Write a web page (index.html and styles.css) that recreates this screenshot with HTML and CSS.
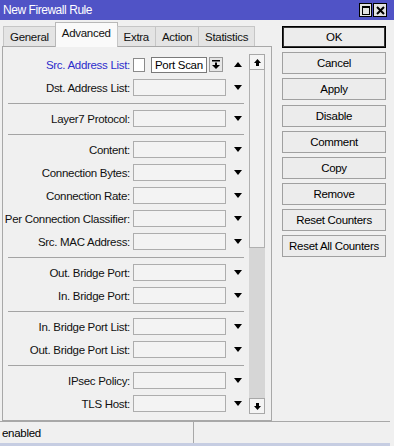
FILE: index.html
```html
<!DOCTYPE html>
<html lang="en">
<head>
  <meta charset="UTF-8" />
  <title>New Firewall Rule</title>
  <link rel="stylesheet" href="styles.css">
</head>
<body>
  <!-- Title bar -->
  <div class="titlebar">
    <span class="title">New Firewall Rule</span>
    <div class="title-buttons">
      <span class="title-btn"><span class="max-box"></span></span>
      <span class="title-btn close">
        <svg width="9" height="9" viewBox="0 0 9 9"><path d="M1 1 L8 8 M8 1 L1 8" stroke="#000" stroke-width="2"/></svg>
      </span>
    </div>
  </div>

  <div class="main">
    <!-- Tabs + form -->
    <div class="tabs-area">
      <div class="tabs">
        <div class="tab">General</div>
        <div class="tab active">Advanced</div>
        <div class="tab">Extra</div>
        <div class="tab">Action</div>
        <div class="tab">Statistics</div>
      </div>

      <div class="panel">
        <div class="form">
          <div class="row">
            <span class="label blue">Src. Address List:</span>
            <div class="multi">
              <span class="check"></span>
              <span class="value">Port Scan</span>
              <span class="drop-btn">
                <svg width="8" height="9" viewBox="0 0 8 9"><rect x="0" y="0" width="8" height="1.5" fill="#000"/><rect x="3" y="2.5" width="2" height="2.5" fill="#000"/><path d="M0 5 L8 5 L4 9 Z" fill="#000"/></svg>
              </span>
            </div>
            <span class="arrow up"></span>
          </div>
          <div class="row">
            <span class="label">Dst. Address List:</span>
            <span class="field"></span>
            <span class="arrow"></span>
          </div>
          <div class="sep"></div>
          <div class="row">
            <span class="label">Layer7 Protocol:</span>
            <span class="field"></span>
            <span class="arrow"></span>
          </div>
          <div class="sep"></div>
          <div class="row">
            <span class="label">Content:</span>
            <span class="field"></span>
            <span class="arrow"></span>
          </div>
          <div class="row">
            <span class="label">Connection Bytes:</span>
            <span class="field"></span>
            <span class="arrow"></span>
          </div>
          <div class="row">
            <span class="label">Connection Rate:</span>
            <span class="field"></span>
            <span class="arrow"></span>
          </div>
          <div class="row">
            <span class="label">Per Connection Classifier:</span>
            <span class="field"></span>
            <span class="arrow"></span>
          </div>
          <div class="row">
            <span class="label">Src. MAC Address:</span>
            <span class="field"></span>
            <span class="arrow"></span>
          </div>
          <div class="sep"></div>
          <div class="row">
            <span class="label">Out. Bridge Port:</span>
            <span class="field"></span>
            <span class="arrow"></span>
          </div>
          <div class="row">
            <span class="label">In. Bridge Port:</span>
            <span class="field"></span>
            <span class="arrow"></span>
          </div>
          <div class="sep"></div>
          <div class="row">
            <span class="label">In. Bridge Port List:</span>
            <span class="field"></span>
            <span class="arrow"></span>
          </div>
          <div class="row">
            <span class="label">Out. Bridge Port List:</span>
            <span class="field"></span>
            <span class="arrow"></span>
          </div>
          <div class="sep"></div>
          <div class="row">
            <span class="label">IPsec Policy:</span>
            <span class="field"></span>
            <span class="arrow"></span>
          </div>
          <div class="row">
            <span class="label">TLS Host:</span>
            <span class="field"></span>
            <span class="arrow"></span>
          </div>
        </div>

        <!-- Vertical scrollbar -->
        <div class="scrollbar">
          <span class="sb-btn">
            <svg width="7" height="7" viewBox="0 0 7 7"><path d="M0 4 L7 4 L3.5 0 Z" fill="#000"/><rect x="2" y="4" width="3" height="3" fill="#000"/></svg>
          </span>
          <span class="sb-thumb"></span>
          <span class="sb-track"></span>
          <span class="sb-btn">
            <svg width="7" height="7" viewBox="0 0 7 7"><rect x="2" y="0" width="3" height="3" fill="#000"/><path d="M0 3 L7 3 L3.5 7 Z" fill="#000"/></svg>
          </span>
        </div>
      </div>
    </div>

    <!-- Command buttons -->
    <div class="buttons">
      <div class="btn default">OK</div>
      <div class="btn">Cancel</div>
      <div class="btn">Apply</div>
      <div class="btn gap">Disable</div>
      <div class="btn">Comment</div>
      <div class="btn">Copy</div>
      <div class="btn">Remove</div>
      <div class="btn">Reset Counters</div>
      <div class="btn">Reset All Counters</div>
    </div>
  </div>

  <!-- Status bar -->
  <div class="status">
    <div class="cell first">enabled</div>
    <div class="cell"></div>
  </div>
</body>
</html>
```

FILE: styles.css
```css
/* GENERAL */
* {
  box-sizing: border-box;
}

body {
  margin: 0;
  width: 394px;
  height: 446px;
  overflow: hidden;
  background: #f0f0f0;
  font-family: "Liberation Sans", Arial, sans-serif;
  font-size: 11.5px;
  letter-spacing: -0.3px;
  color: #111;
}

/* TITLE BAR */
.titlebar {
  height: 20px;
  background: #5053c6;
  color: #fff;
  display: flex;
  align-items: center;
  justify-content: space-between;
  padding: 0 7px 0 3px;
  font-size: 12px;
  letter-spacing: -0.45px;
}

.title-buttons {
  display: flex;
  gap: 1px;
}

.title-btn {
  width: 13px;
  height: 14px;
  border: 1px solid #000;
  background: #e2e2e2;
  display: flex;
  align-items: center;
  justify-content: center;
}

.title-btn.close {
  width: 14px;
}

.max-box {
  width: 8px;
  height: 9px;
  border: 1px solid #000;
  border-top-width: 2px;
}

/* LAYOUT */
.main {
  display: flex;
  height: 401px;
  padding-top: 2px;
}

.tabs-area {
  margin-left: 2px;
  width: 270px;
  display: flex;
  flex-direction: column;
}

/* TABS */
.tabs {
  display: flex;
  align-items: flex-end;
  height: 24px;
  padding-left: 1px;
  position: relative;
  z-index: 1;
}

.tab {
  height: 20px;
  padding: 0 6px;
  border: 1px solid #c6c6c6;
  border-bottom: none;
  background: #e4e4e4;
  display: flex;
  align-items: center;
  margin-right: -1px;
}

.tab.active {
  height: 25px;
  margin-bottom: -1px;
  padding: 0 6px 4px;
  background: #fafafa;
  border-color: #b8b8b8;
}

/* PANEL */
.panel {
  flex: 1;
  display: flex;
  border: 1px solid #a8a8a8;
}

.form {
  width: 246px;
  padding-top: 6px;
}

.row {
  height: 23px;
  display: grid;
  grid-template-columns: 130px 93px 23px;
  align-items: center;
}

.label {
  text-align: right;
  padding-right: 3px;
  white-space: nowrap;
}

.label.blue {
  color: #2d2dcc;
}

.field {
  height: 17px;
  border: 1px solid #adadad;
  background: #f3f3f3;
}

.arrow {
  justify-self: center;
  width: 0;
  height: 0;
  border-left: 4px solid transparent;
  border-right: 4px solid transparent;
  border-top: 5px solid #000;
}

.arrow.up {
  border-top: none;
  border-bottom: 5px solid #000;
}

.multi {
  display: flex;
  align-items: center;
}

.check {
  width: 12px;
  height: 14px;
  border: 1px solid #8a8a8a;
  background: #fff;
  margin-right: 6px;
}

.value {
  width: 56px;
  height: 16px;
  border: 1px solid #7a7a7a;
  background: #fff;
  padding-left: 3px;
  line-height: 14px;
  color: #000;
}

.drop-btn {
  width: 14px;
  height: 15px;
  margin-left: 2px;
  border: 1px solid #9a9a9a;
  background: #e6e6e6;
  display: flex;
  align-items: center;
  justify-content: center;
}

.sep {
  height: 8px;
  width: 236px;
  margin-left: 5px;
  background: linear-gradient(#a4a4a4, #a4a4a4) 0 4px / 100% 1px no-repeat;
}

/* SCROLLBAR */
.scrollbar {
  width: 16px;
  margin: 7px 0 6px;
  display: flex;
  flex-direction: column;
}

.sb-btn {
  height: 16px;
  border: 1px solid #a8a8a8;
  background: #f4f4f4;
  display: flex;
  align-items: center;
  justify-content: center;
}

.sb-thumb {
  height: 178px;
  border: 1px solid #b0b0b0;
  border-top: none;
  background: #f0f0f0;
}

.sb-track {
  flex: 1;
  background: #d6d6d6;
}

/* BUTTONS */
.buttons {
  margin-left: 10px;
  margin-top: 4px;
  width: 104px;
}

.btn {
  height: 22px;
  margin-bottom: 4px;
  border: 1px solid #a0a0a0;
  background: #ececec;
  display: flex;
  align-items: center;
  justify-content: center;
  color: #000;
}

.btn.default {
  border-color: #000;
  box-shadow: inset 0 0 0 1px #333;
}

.btn.gap {
  margin-top: 5px;
}

/* STATUS BAR */
.status {
  display: flex;
  width: 390px;
  height: 25px;
  border-top: 1px solid #a8a8a8;
  border-bottom: 3px solid #c6cde2;
}

.cell {
  flex: 1;
  display: flex;
  align-items: center;
  padding-left: 2px;
  color: #000;
}

.cell.first {
  flex: none;
  width: 194px;
  border-right: 1px solid #a8a8a8;
}
```
